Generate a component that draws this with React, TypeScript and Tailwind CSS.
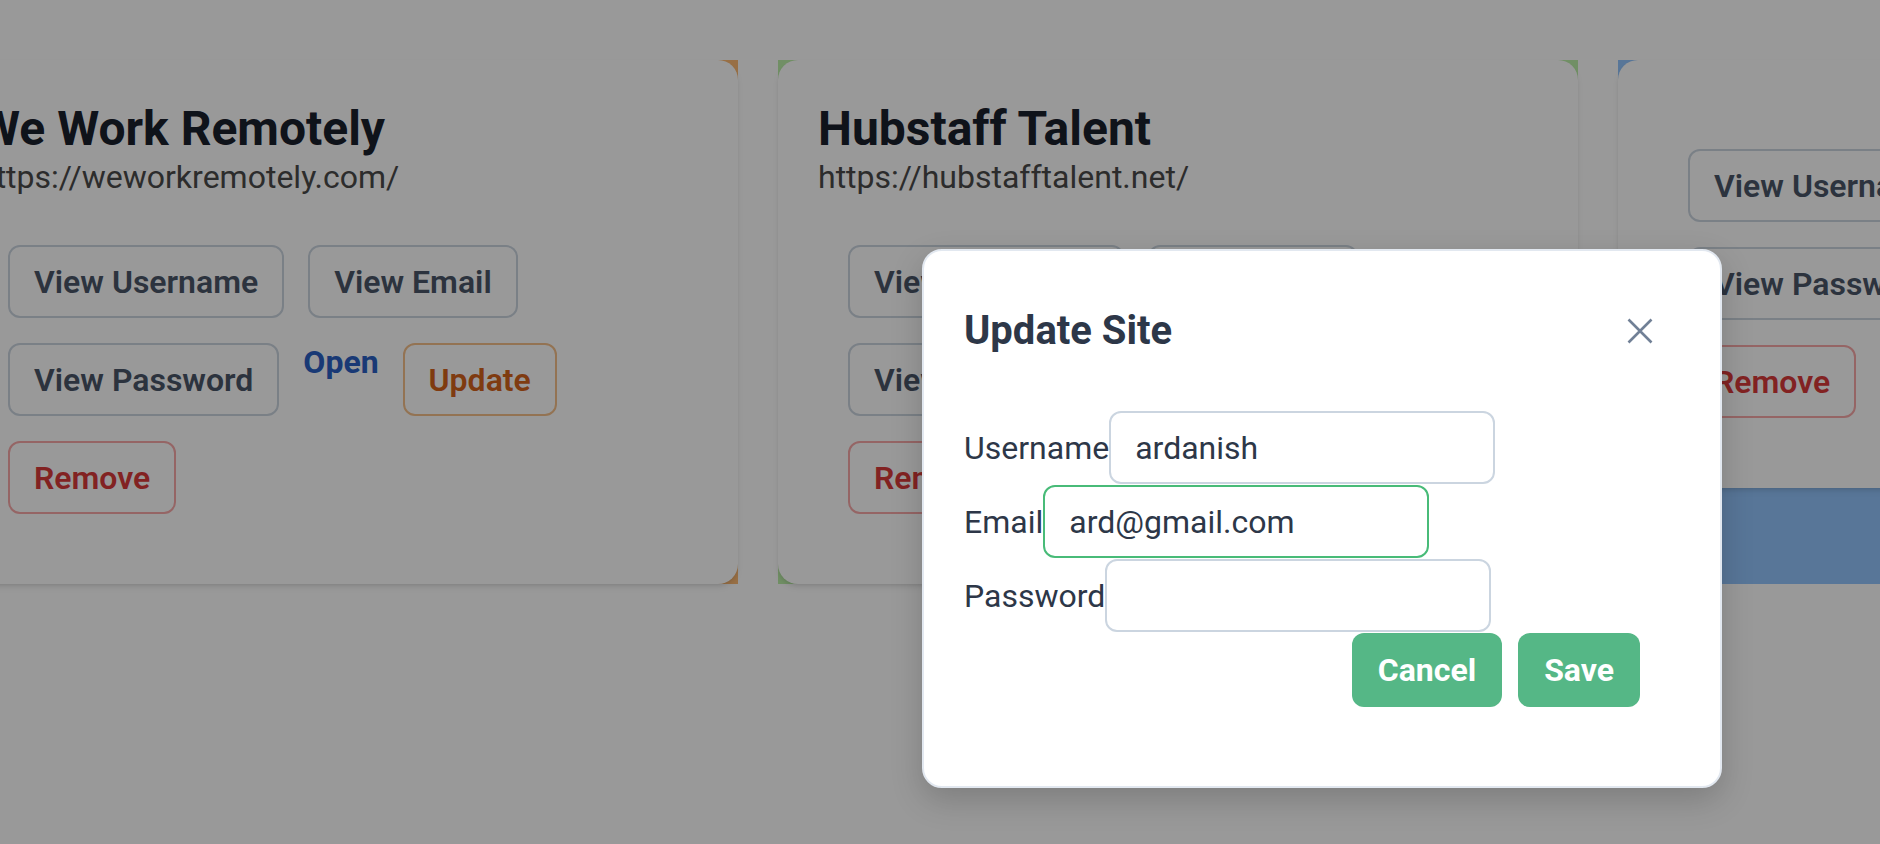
import React from "react";

interface Site {
  id: string;
  title: string;
  url: string;
  tone: string;
}

const sites: Site[] = [
  { id: "wwr", title: "We Work Remotely", url: "https://weworkremotely.com/", tone: "bg-[#fdba74]" },
  { id: "hub", title: "Hubstaff Talent", url: "https://hubstafftalent.net/", tone: "bg-[#bcefa8]" },
  { id: "blank", title: "", url: "", tone: "bg-[#93c5fd]" },
];

const outline =
  "h-[73px] px-6 border-2 rounded-[12px] text-[32px] font-semibold leading-none flex items-center shrink-0";

const SiteCard = ({ site }: { site: Site }) => (
  <div className={`w-[800px] shrink-0 ${site.tone}`}>
    <div className="bg-white rounded-[20px] shadow-md pl-[40px] pr-[40px] pt-[45px] pb-[70px]">
      <h2 className="text-[48px] leading-[48px] font-bold text-[#1a202c]">{site.title}</h2>
      <p className="text-[32px] leading-[48px] text-[#4a4a4a]">{site.url}</p>

      {/* actions */}
      <div className="mt-[44px] ml-[30px] flex flex-col gap-[25px]">
        <div className="flex items-start gap-[24px]">
          <button className={`${outline} border-[#cbd5e0] text-[#4a5568]`}>View Username</button>
          <button className={`${outline} border-[#cbd5e0] text-[#4a5568]`}>View Email</button>
        </div>
        <div className="flex items-start gap-[24px]">
          <button className={`${outline} border-[#cbd5e0] text-[#4a5568]`}>View Password</button>
          <a className="text-[32px] font-bold text-[#2b5fc4] leading-[38px] shrink-0">Open</a>
          <button className={`${outline} border-[#f6c08a] text-[#d4631c]`}>Update</button>
        </div>
        <div className="flex items-start">
          <button className={`${outline} border-[#f8a8a8] text-[#d93a3a]`}>Remove</button>
        </div>
      </div>
    </div>
  </div>
);

const Field = ({ label, value, focused }: { label: string; value: string; focused?: boolean }) => (
  <div className="flex items-center">
    <label className="text-[32px] text-[#2d3748] leading-none">{label}</label>
    <input
      readOnly
      value={value}
      className={`w-[386px] h-[73px] border-2 rounded-[12px] px-[24px] text-[32px] text-[#2d3748] bg-white outline-none ${
        focused ? "border-[#48bb78]" : "border-[#cbd5e0]"
      }`}
    />
  </div>
);

export default function App() {
  return (
    <div className="relative h-[844px] w-full overflow-hidden bg-white font-['Roboto','Liberation_Sans',sans-serif]">
      <div className="pt-[60px] -ml-[62px] flex items-stretch gap-[40px]">
        {sites.map((s) => (
          <SiteCard key={s.id} site={s} />
        ))}
      </div>

      {/* overlay */}
      <div className="absolute inset-0 bg-black/40" />

      {/* modal */}
      <div className="absolute left-[922px] top-[249px] w-[800px] h-[539px] bg-white rounded-[20px] border-2 border-[#e2e8f0] shadow-[0_12px_32px_rgba(0,0,0,0.18)] px-[40px] pt-[56px]">
        <div className="flex items-center justify-between h-[48px]">
          <h2 className="text-[40px] leading-[48px] font-bold text-[#2d3748]">Update Site</h2>
          <button className="w-[48px] h-[48px] mr-[16px] flex items-center justify-center">
            <svg width="26" height="26" viewBox="0 0 26 26" fill="none" stroke="#718096" strokeWidth="2.6">
              <path d="M1.5 1.5 24.5 24.5M24.5 1.5 1.5 24.5" />
            </svg>
          </button>
        </div>

        <div className="mt-[56px] flex flex-col gap-[1px]">
          <Field label="Username" value="ardanish" />
          <Field label="Email" value="ard@gmail.com" focused />
          <Field label="Password" value="" />
          <div className="flex justify-end gap-[16px] pr-[40px]">
            <button className="h-[74px] px-[26px] rounded-[12px] bg-[#55b786] text-white text-[32px] font-bold">
              Cancel
            </button>
            <button className="h-[74px] px-[26px] rounded-[12px] bg-[#55b786] text-white text-[32px] font-bold">
              Save
            </button>
          </div>
        </div>
      </div>
    </div>
  );
}
